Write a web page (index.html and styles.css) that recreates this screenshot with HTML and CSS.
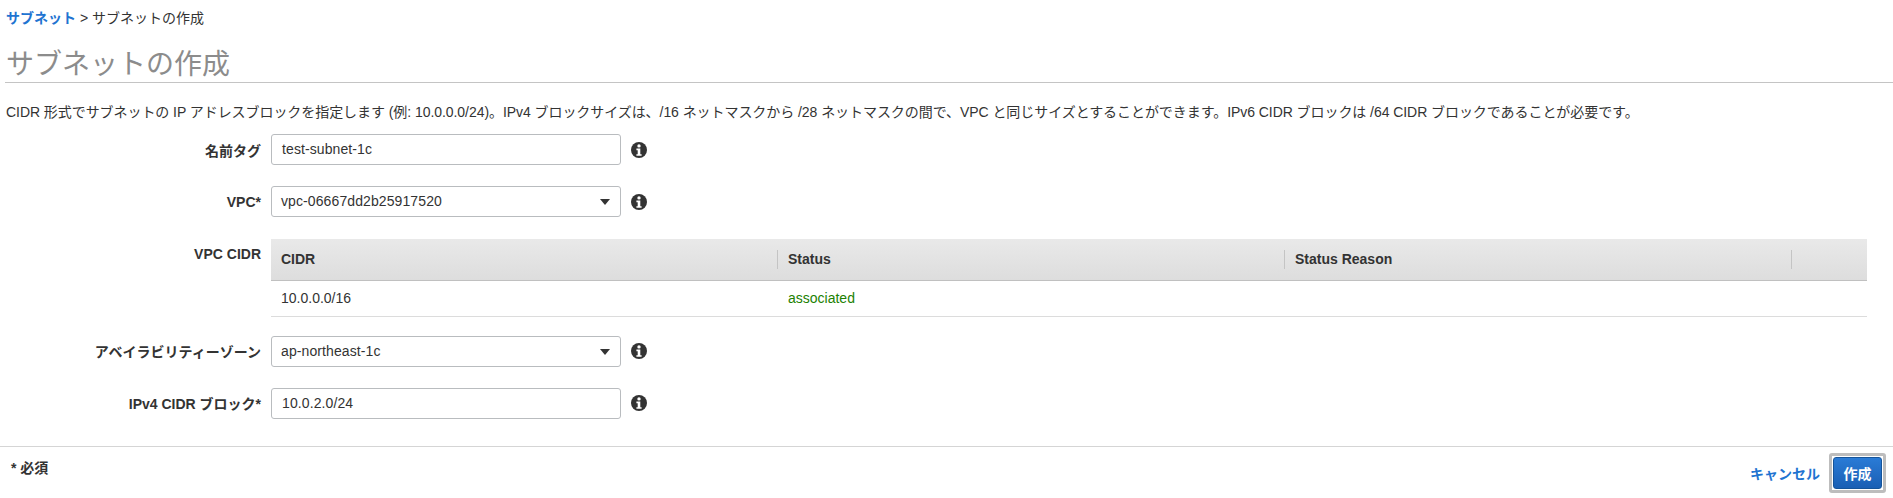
FILE: index.html
```html
<!DOCTYPE html>
<html lang="ja">
<head>
  <meta charset="UTF-8" />
  <title>サブネットの作成</title>
  <link rel="stylesheet" href="styles.css">
</head>
<body>

  <div class="breadcrumb"><a href="#">サブネット</a> &gt; サブネットの作成</div>
  <h1 class="title">サブネットの作成</h1>
  <p class="desc">CIDR 形式でサブネットの IP アドレスブロックを指定します (例: 10.0.0.0/24)。IPv4 ブロックサイズは、/16 ネットマスクから /28 ネットマスクの間で、VPC と同じサイズとすることができます。IPv6 CIDR ブロックは /64 CIDR ブロックであることが必要です。</p>

  <div class="form">
    <div class="row">
      <label class="label">名前タグ</label>
      <div class="field">test-subnet-1c</div>
      <svg class="info" viewBox="0 0 16 16"><circle cx="8" cy="8" r="8" fill="#333"/><circle cx="8" cy="3.9" r="1.7" fill="#fff"/><path d="M5.4 6.6h3.9v5.6h1.3v1.6H5.4v-1.6h1.3V8.2H5.4z" fill="#fff"/></svg>
    </div>

    <div class="row row-vpc">
      <label class="label">VPC*</label>
      <div class="field select">vpc-06667dd2b25917520</div>
      <svg class="info" viewBox="0 0 16 16"><circle cx="8" cy="8" r="8" fill="#333"/><circle cx="8" cy="3.9" r="1.7" fill="#fff"/><path d="M5.4 6.6h3.9v5.6h1.3v1.6H5.4v-1.6h1.3V8.2H5.4z" fill="#fff"/></svg>
    </div>

    <div class="row row-table">
      <label class="label label-table">VPC CIDR</label>
      <table class="cidr-table">
        <thead>
          <tr>
            <th class="col"><div>CIDR</div></th>
            <th class="col"><div>Status</div></th>
            <th class="col"><div>Status Reason</div></th>
            <th></th>
          </tr>
        </thead>
        <tbody>
          <tr>
            <td>10.0.0.0/16</td>
            <td class="ok">associated</td>
            <td></td>
            <td></td>
          </tr>
        </tbody>
      </table>
    </div>

    <div class="row">
      <label class="label">アベイラビリティーゾーン</label>
      <div class="field select">ap-northeast-1c</div>
      <svg class="info" viewBox="0 0 16 16"><circle cx="8" cy="8" r="8" fill="#333"/><circle cx="8" cy="3.9" r="1.7" fill="#fff"/><path d="M5.4 6.6h3.9v5.6h1.3v1.6H5.4v-1.6h1.3V8.2H5.4z" fill="#fff"/></svg>
    </div>

    <div class="row">
      <label class="label">IPv4 CIDR ブロック*</label>
      <div class="field">10.0.2.0/24</div>
      <svg class="info" viewBox="0 0 16 16"><circle cx="8" cy="8" r="8" fill="#333"/><circle cx="8" cy="3.9" r="1.7" fill="#fff"/><path d="M5.4 6.6h3.9v5.6h1.3v1.6H5.4v-1.6h1.3V8.2H5.4z" fill="#fff"/></svg>
    </div>
  </div>

  <div class="footer">
    <span class="required">* 必須</span>
    <a class="cancel" href="#">キャンセル</a>
    <span class="create-wrap"><button class="create">作成</button></span>
  </div>

</body>
</html>
```

FILE: styles.css
```css
* {
  box-sizing: border-box;
}

body {
  margin: 0;
  height: 498px;
  overflow: hidden;
  background: #fff;
  color: #333;
  font-family: "Liberation Sans", "Noto Sans CJK JP", sans-serif;
  font-size: 14px;
}

a {
  color: #1f74d1;
  text-decoration: none;
  font-weight: bold;
}

.breadcrumb {
  padding: 9px 0 0 6px;
  height: 36px;
  line-height: 18px;
}

.title {
  margin: 0 0 0 5px;
  height: 47px;
  padding: 11px 0 0 1px;
  border-bottom: 1px solid #c4c4c4;
  color: #8c8c8c;
  font-size: 28px;
  line-height: 35px;
  font-weight: normal;
}

.desc {
  margin: 0;
  padding: 19px 0 0 6px;
  height: 51px;
  line-height: 20px;
  letter-spacing: -0.06px;
}

.form {
  padding-bottom: 6px;
}

.row {
  display: flex;
  align-items: center;
  height: 31px;
  margin-bottom: 21px;
}

.row-vpc {
  margin-bottom: 22px;
}

.label {
  width: 261px;
  margin-right: 10px;
  text-align: right;
  font-weight: bold;
}

.field {
  position: relative;
  width: 350px;
  height: 31px;
  padding: 0 10px;
  border: 1px solid #b9bcbf;
  border-radius: 3px;
  line-height: 29px;
  letter-spacing: 0.1px;
}

.select {
  padding-left: 9px;
}

.select::after {
  content: "";
  position: absolute;
  right: 10px;
  top: 12px;
  border-left: 5.5px solid transparent;
  border-right: 5.5px solid transparent;
  border-top: 6px solid #333;
}

.info {
  width: 16px;
  height: 16px;
  margin-left: 10px;
}

.row-table {
  align-items: flex-start;
  height: auto;
  margin-bottom: 19px;
}

.label-table {
  padding-top: 7px;
}

.cidr-table {
  width: 1596px;
  table-layout: fixed;
  border-collapse: collapse;
}

.cidr-table th {
  height: 41px;
  padding: 0;
  background: linear-gradient(#e9e9e9, #dddddd);
  border-bottom: 1px solid #c0c0c0;
  text-align: left;
}

.cidr-table .col {
  width: 507px;
}

.col div {
  height: 19px;
  padding-left: 10px;
  line-height: 19px;
  border-right: 1px solid #c4c4c4;
}

.cidr-table td {
  height: 36px;
  padding: 0 0 0 10px;
  border-bottom: 1px solid #dcdcdc;
}

.ok {
  color: #1d8102;
}

.footer {
  display: flex;
  align-items: center;
  height: 52px;
  border-top: 1px solid #d5d5d5;
  padding: 6px 7px 5px 11px;
}

.required {
  align-self: flex-start;
  margin-top: 5px;
  margin-right: auto;
  line-height: 20px;
  font-weight: bold;
}

.cancel {
  margin-right: 9px;
}

.create-wrap {
  padding: 1px;
  background: #fff;
  border: 3px solid #bdbdbd;
  border-radius: 3px;
}

.create {
  display: block;
  width: 49px;
  height: 32px;
  padding: 0;
  border: 1px solid #15549a;
  border-radius: 3px;
  background: linear-gradient(#2a7bd6, #1a5fb4);
  color: #fff;
  font-family: inherit;
  font-size: 14px;
  font-weight: bold;
}
```
